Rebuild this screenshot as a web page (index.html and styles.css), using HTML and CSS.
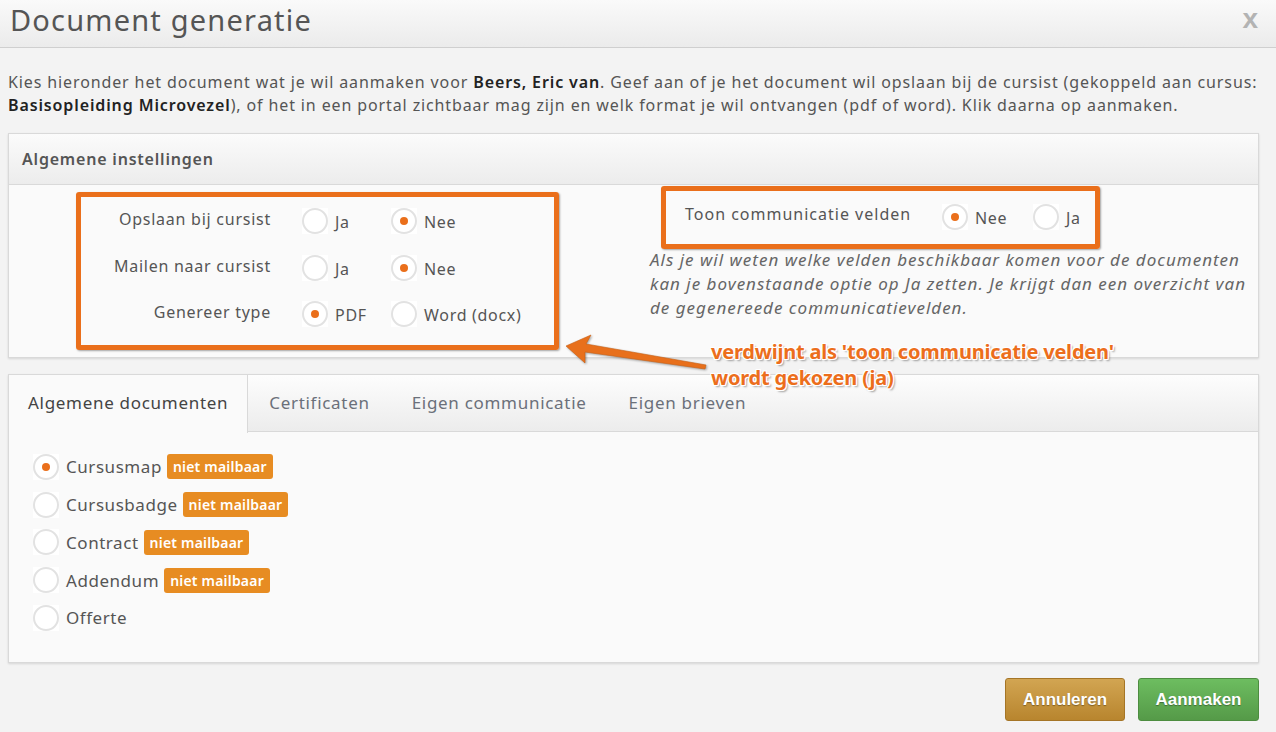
FILE: index.html
```html
<!DOCTYPE html>
<html lang="nl">
<head>
<meta charset="utf-8">
<title>Document generatie</title>
<link rel="stylesheet" href="styles.css">
</head>
<body>
<div class="modal">
  <header class="modal-header">
    <h1 class="modal-title">Document generatie</h1>
    <span class="close">x</span>
  </header>

  <p class="intro">Kies hieronder het document wat je wil aanmaken voor <b>Beers, Eric van</b>. Geef aan of je het document wil opslaan bij de cursist (gekoppeld aan cursus: <b>Basisopleiding Microvezel</b>), of het in een portal zichtbaar mag zijn en welk format je wil ontvangen (pdf of word). Klik daarna op aanmaken.</p>

  <section class="panel settings">
    <div class="panel-heading">Algemene instellingen</div>
    <div class="panel-body settings-body">
      <div class="col-left">
        <div class="hl-box form-box">
          <div class="form-row">
            <span class="form-label">Opslaan bij cursist</span>
            <span class="opt"><span class="radio"></span>Ja</span>
            <span class="opt"><span class="radio checked"></span>Nee</span>
          </div>
          <div class="form-row">
            <span class="form-label">Mailen naar cursist</span>
            <span class="opt"><span class="radio"></span>Ja</span>
            <span class="opt"><span class="radio checked"></span>Nee</span>
          </div>
          <div class="form-row">
            <span class="form-label">Genereer type</span>
            <span class="opt"><span class="radio checked"></span>PDF</span>
            <span class="opt"><span class="radio"></span>Word (docx)</span>
          </div>
        </div>
      </div>
      <div class="col-right">
        <div class="hl-box toon-box">
          <span class="toon-label">Toon communicatie velden</span>
          <span class="opt opt-wide"><span class="radio checked"></span>Nee</span>
          <span class="opt"><span class="radio"></span>Ja</span>
        </div>
        <p class="help">Als je wil weten welke velden beschikbaar komen voor de documenten kan je bovenstaande optie op Ja zetten. Je krijgt dan een overzicht van de gegenereede communicatievelden.</p>
      </div>
    </div>
  </section>

  <section class="panel docs">
    <nav class="tabs">
      <span class="tab active">Algemene documenten</span>
      <span class="tab">Certificaten</span>
      <span class="tab">Eigen communicatie</span>
      <span class="tab">Eigen brieven</span>
    </nav>
    <div class="doc-list">
      <div class="doc"><span class="radio checked"></span>Cursusmap <span class="badge">niet mailbaar</span></div>
      <div class="doc"><span class="radio"></span>Cursusbadge <span class="badge">niet mailbaar</span></div>
      <div class="doc"><span class="radio"></span>Contract <span class="badge">niet mailbaar</span></div>
      <div class="doc"><span class="radio"></span>Addendum <span class="badge">niet mailbaar</span></div>
      <div class="doc"><span class="radio"></span>Offerte</div>
    </div>
  </section>

  <footer class="modal-footer">
    <button class="btn btn-cancel">Annuleren</button>
    <button class="btn btn-ok">Aanmaken</button>
  </footer>

  <div class="annotation">
    <svg class="arrow" width="160" height="40" viewBox="0 0 160 40">
      <polygon points="2,12 27,1 22,10 142,31 141,35 21,18 21,29" fill="#e8701c" stroke="#c95f12" stroke-width="0.6" stroke-linejoin="round"/>
    </svg>
    <div class="note">verdwijnt als 'toon communicatie velden'<br>wordt gekozen (ja)</div>
  </div>
</div>
</body>
</html>
```

FILE: styles.css
```css
* { box-sizing: border-box; }

html, body {
  margin: 0;
  padding: 0;
}

body {
  background: #f3f3f3;
  font-family: "Noto Sans", "Open Sans", "Liberation Sans", sans-serif;
  color: #555;
  width: 1276px;
  height: 732px;
  overflow: hidden;
}

.modal {
  position: relative;
  height: 732px;
}

.modal-header {
  height: 48px;
  background: linear-gradient(#fafafa, #ebebeb);
  border-bottom: 1px solid #cfcfcf;
  display: flex;
  align-items: center;
  justify-content: space-between;
  padding: 0 18px 0 10px;
}

.modal-title {
  margin: 0;
  font-size: 29px;
  font-weight: 400;
  letter-spacing: 1.2px;
  color: #555;
  line-height: 1;
  position: relative;
  top: -4px;
}

.close {
  font-family: "Liberation Sans", Arial, sans-serif;
  font-weight: bold;
  font-size: 28px;
  color: #b3b3b3;
  position: relative;
  top: -5px;
}

.intro {
  margin: 23px 4px 0 8px;
  font-size: 16px;
  line-height: 23px;
  letter-spacing: 0.88px;
  color: #555;
}

.intro b {
  color: #222;
  font-weight: 600;
}

.panel {
  margin-left: 8px;
  width: 1251px;
  background: #fafafa;
  border: 1px solid #d9d9d9;
  box-shadow: 0 1px 2px rgba(0,0,0,0.12);
}

.settings {
  margin-top: 16px;
}

.panel-heading {
  height: 51px;
  background: linear-gradient(#fbfbfb, #ececec);
  border-bottom: 1px solid #d9d9d9;
  padding-left: 13px;
  font-size: 16px;
  font-weight: 600;
  letter-spacing: 0.8px;
  line-height: 50px;
  color: #555;
}

.settings-body {
  display: flex;
  height: 172px;
}

.col-left {
  flex: none;
  width: 641px;
  padding: 7px 0 0 67px;
}

.hl-box {
  border: 5px solid #ea6f1b;
  border-radius: 3px;
  box-shadow: 1px 1px 2px rgba(0,0,0,0.35);
}

.form-box {
  width: 483px;
  height: 158px;
  padding: 2px 0 0 0;
}

.form-row {
  display: flex;
  align-items: center;
  height: 46.5px;
  white-space: nowrap;
}

.form-label {
  flex: none;
  width: 190px;
  text-align: right;
  padding-right: 31px;
  box-sizing: content-box;
  font-size: 16px;
  letter-spacing: 0.75px;
  position: relative;
  top: -3px;
}

.opt {
  flex: none;
  display: inline-flex;
  align-items: center;
  width: 89px;
  font-size: 16px;
  letter-spacing: 0.7px;
  color: #555;
  white-space: nowrap;
}

.opt-wide { width: 91px; }

.radio {
  flex: none;
  display: inline-block;
  position: relative;
  width: 26px;
  height: 26px;
  margin-right: 7px;
  background: #fff;
}

.radio::before {
  content: "";
  position: absolute;
  inset: 0;
  border: 2px solid #e2e2e2;
  border-radius: 50%;
  background: #fff;
}

.radio.checked::after {
  content: "";
  position: absolute;
  left: 9px;
  top: 9px;
  width: 8px;
  height: 8px;
  border-radius: 50%;
  background: #ea6f1b;
}

.opt .radio { position: relative; top: -1px; }

.col-right {
  flex: 1;
  min-width: 0;
  padding-top: 1px;
}

.toon-box {
  margin: 0 0 0 11px;
  width: 439px;
  height: 63px;
  display: flex;
  align-items: center;
  padding-left: 19px;
}

.toon-label {
  flex: none;
  font-size: 16px;
  letter-spacing: 1px;
  width: 257px;
  position: relative;
  top: -4px;
}

.help {
  margin: -1px 0 0 0;
  font-size: 17px;
  font-style: italic;
  line-height: 24px;
  letter-spacing: 1px;
  color: #666;
  width: 608px;
}

.docs {
  margin-top: 16px;
  height: 289px;
}

.tabs {
  height: 57px;
  display: flex;
  background: linear-gradient(#fdfdfd, #ececec);
  border-bottom: 1px solid #d9d9d9;
}

.tab {
  padding: 0 21px;
  font-size: 17px;
  letter-spacing: 0.7px;
  line-height: 56px;
  color: #6b707a;
}

.tab.active {
  background: #fafafa;
  color: #444;
  border-right: 1px solid #d9d9d9;
  height: 58px;
  padding: 0 19px;
}

.doc-list {
  padding: 16px 0 0 24px;
}

.doc {
  display: flex;
  align-items: center;
  height: 37.75px;
  font-size: 17px;
  letter-spacing: 0.55px;
  color: #555;
}

.doc .radio {
  margin-right: 7px;
}

.badge {
  margin-left: 5px;
  background: #e78c22;
  color: #fff;
  font-size: 14px;
  font-weight: 600;
  letter-spacing: 0.2px;
  line-height: 25px;
  padding: 0 6px;
  border-radius: 3px;
}

.modal-footer {
  display: flex;
  justify-content: flex-end;
  gap: 13px;
  padding: 15px 17px 0 0;
}

.btn {
  height: 43px;
  width: 121px;
  border-radius: 3px;
  font-family: "Liberation Sans", Arial, sans-serif;
  font-weight: bold;
  font-size: 17px;
  color: #fff;
  text-shadow: 0 1px 1px rgba(0,0,0,0.35);
  cursor: pointer;
}

.btn-cancel {
  width: 120px;
  background: linear-gradient(#d2a552, #b8852e);
  border: 1px solid #a57526;
}

.btn-ok {
  background: linear-gradient(#6dbd60, #559a48);
  border: 1px solid #4d8d40;
}

.annotation {
  position: absolute;
  left: 0;
  top: 0;
  width: 0;
  height: 0;
}

.arrow {
  position: absolute;
  left: 564px;
  top: 334px;
  filter: drop-shadow(1px 1px 1px rgba(0,0,0,0.35));
}

.note {
  position: absolute;
  left: 711px;
  top: 339px;
  width: 520px;
  font-size: 20px;
  font-weight: 700;
  line-height: 26px;
  color: #ec6e1c;
  letter-spacing: -0.2px;
  white-space: nowrap;
  text-shadow:
    -1px -1px 0 #fff, 1px -1px 0 #fff, -1px 1px 0 #fff, 1px 1px 0 #fff,
    0 -1px 0 #fff, 0 1px 0 #fff, -1px 0 0 #fff, 1px 0 0 #fff,
    2px 2px 2px rgba(0,0,0,0.35);
}
```
